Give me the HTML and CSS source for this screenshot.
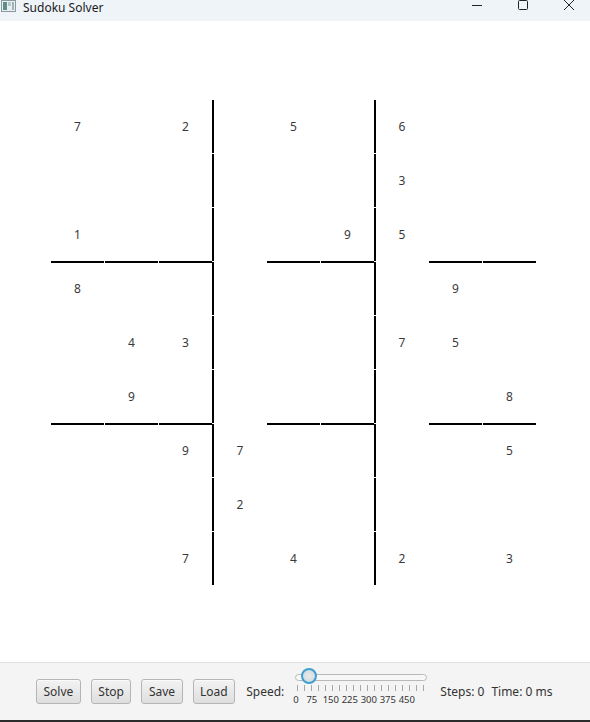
FILE: index.html
```html
<!DOCTYPE html>
<html lang="en">
<head>
  <meta charset="UTF-8">
  <meta name="viewport" content="width=device-width, initial-scale=1.0">
  <title>Sudoku Solver</title>
  <link rel="stylesheet" href="styles.css">
</head>
<body>
  <div class="window">
    <!-- barra de titulo -->
    <div class="titlebar">
      <div class="app-icon">
        <svg width="16" height="14" viewBox="0 0 16 14">
          <rect x="0.5" y="1.5" width="14" height="11" fill="#e9eef0" stroke="#8a9aa0"/>
          <rect x="2" y="3" width="4" height="8" fill="#5a8f8a"/>
          <rect x="7" y="3" width="3" height="4" fill="#b8c7c9"/>
          <rect x="11" y="3" width="2" height="8" fill="#9fb3b5"/>
        </svg>
      </div>
      <span class="title">Sudoku Solver</span>
      <div class="win-controls">
        <svg class="ctl" width="46" height="20" viewBox="0 0 46 20">
          <path d="M18 5.5 H28" stroke="#222" stroke-width="1"/>
        </svg>
        <svg class="ctl" width="46" height="20" viewBox="0 0 46 20">
          <rect x="18.5" y="0.5" width="9" height="9" rx="1" fill="none" stroke="#222" stroke-width="1"/>
        </svg>
        <svg class="ctl" width="46" height="20" viewBox="0 0 46 20">
          <path d="M18 0 L28 10 M28 0 L18 10" stroke="#222" stroke-width="1"/>
        </svg>
      </div>
    </div>

    <!-- tabuleiro -->
    <div class="board-area">
      <div class="board" id="board"></div>
    </div>

    <!-- barra de controles -->
    <div class="toolbar">
      <button class="btn">Solve</button>
      <button class="btn">Stop</button>
      <button class="btn">Save</button>
      <button class="btn">Load</button>
      <span class="lbl speed-lbl">Speed:</span>
      <div class="slider">
        <div class="track">
          <div class="thumb"></div>
        </div>
        <div class="ticks"></div>
        <div class="tick-labels">
          <span>0</span><span>75</span><span>150</span><span>225</span><span>300</span><span>375</span><span>450</span>
        </div>
      </div>
      <span class="lbl steps">Steps: 0</span>
      <span class="lbl time">Time: 0 ms</span>
    </div>
  </div>

  <script>
    // Tabuleiro inicial (0 = vazio)
    var puzzle = [
      [7,0,2, 0,5,0, 6,0,0],
      [0,0,0, 0,0,0, 3,0,0],
      [1,0,0, 0,0,9, 5,0,0],
      [8,0,0, 0,0,0, 0,9,0],
      [0,4,3, 0,0,0, 7,5,0],
      [0,9,0, 0,0,0, 0,0,8],
      [0,0,9, 7,0,0, 0,0,5],
      [0,0,0, 2,0,0, 0,0,0],
      [0,0,7, 0,4,0, 2,0,3]
    ];

    var board = document.getElementById("board");

    puzzle.forEach(function(row, r) {
      row.forEach(function(value, c) {
        var cell = document.createElement("div");
        cell.className = "cell";
        if (c == 3 || c == 6) {
          cell.classList.add("block-left");
        } else if (r == 2 || r == 5) {
          cell.classList.add("block-bottom");
        }
        cell.textContent = value ? value : "";
        board.appendChild(cell);
      });
    });
  </script>
</body>
</html>
```

FILE: styles.css
```css
html, body {
  margin: 0;
  padding: 0;
}

body {
  font-family: "Noto Sans", "Open Sans", sans-serif;
  font-size: 12px;
  color: #333;
  background: #fff;
}

.window {
  width: 590px;
  height: 722px;
  display: flex;
  flex-direction: column;
  overflow: hidden;
}

/* barra de titulo */
.titlebar {
  height: 21px;
  flex: none;
  display: flex;
  align-items: flex-start;
  background: #eff4f9;
}

.app-icon {
  width: 16px;
  height: 14px;
  margin: -1px 0 0 1px;
}

.title {
  margin-left: 6px;
  margin-top: 1px;
  font-size: 12px;
  line-height: 13px;
  color: #1a1a1a;
}

.win-controls {
  margin-left: auto;
  margin-right: -2px;
  display: flex;
}

.ctl {
  display: block;
}

/* tabuleiro */
.board-area {
  flex: 1;
  padding: 79px 0 0 51px;
  background: #fff;
}

.board {
  display: grid;
  grid-template-columns: repeat(9, 53px);
  grid-template-rows: repeat(9, 53px);
  gap: 1px;
}

.cell {
  display: flex;
  align-items: center;
  justify-content: center;
  font-size: 12px;
  color: #3a3a3a;
  box-sizing: border-box;
}

.block-left {
  border-left: 2px solid #000;
  margin-left: -1px;
}

.block-bottom {
  border-bottom: 2px solid #000;
  margin-bottom: -2px;
}

/* barra de controles */
.toolbar {
  height: 60px;
  flex: none;
  display: flex;
  align-items: center;
  padding-left: 36px;
  background: #f4f4f4;
  border-top: 1px solid #e2e2e2;
  border-bottom: 2px solid #2b2b2b;
  box-sizing: border-box;
}

.btn {
  font-family: "Noto Sans", "Open Sans", sans-serif;
  font-size: 12px;
  color: #333;
  height: 25px;
  padding: 0 6.5px;
  margin-right: 10px;
  border: 1px solid #b5b5b5;
  border-radius: 3px;
  background: linear-gradient(#f3f3f3, #dedede);
  box-shadow: inset 0 1px 0 #fafafa;
}

.lbl {
  font-size: 12px;
  color: #333;
}

.speed-lbl {
  margin-left: 1px;
}

.slider {
  width: 134px;
  margin-left: 10px;
  margin-top: -4px;
  display: flex;
  flex-direction: column;
}

.track {
  position: relative;
  height: 5px;
  border: 1px solid #b9b9b9;
  border-radius: 4px;
  background: #f7f7f7;
  margin: 0 1px;
}

.thumb {
  position: absolute;
  left: 5px;
  top: -7px;
  width: 16px;
  height: 16px;
  border-radius: 50%;
  border: 2px solid #3e9fd0;
  background: radial-gradient(#e9e9e9, #cfd6dc);
  box-sizing: border-box;
}

.ticks {
  height: 6px;
  margin: 4px 2px 0 3px;
  background: repeating-linear-gradient(to right, #a8a8a8 0, #a8a8a8 1px, transparent 1px, transparent 7px);
}

.tick-labels {
  display: flex;
  margin-top: 3px;
  font-size: 9.5px;
  color: #333;
  line-height: 12px;
}

.tick-labels span {
  width: 19px;
  text-align: center;
}

.tick-labels span:first-child {
  width: 7px;
  margin-left: -1px;
  margin-right: 2px;
  text-align: left;
}

.steps {
  margin-left: 12px;
}

.time {
  margin-left: 7px;
}
```
